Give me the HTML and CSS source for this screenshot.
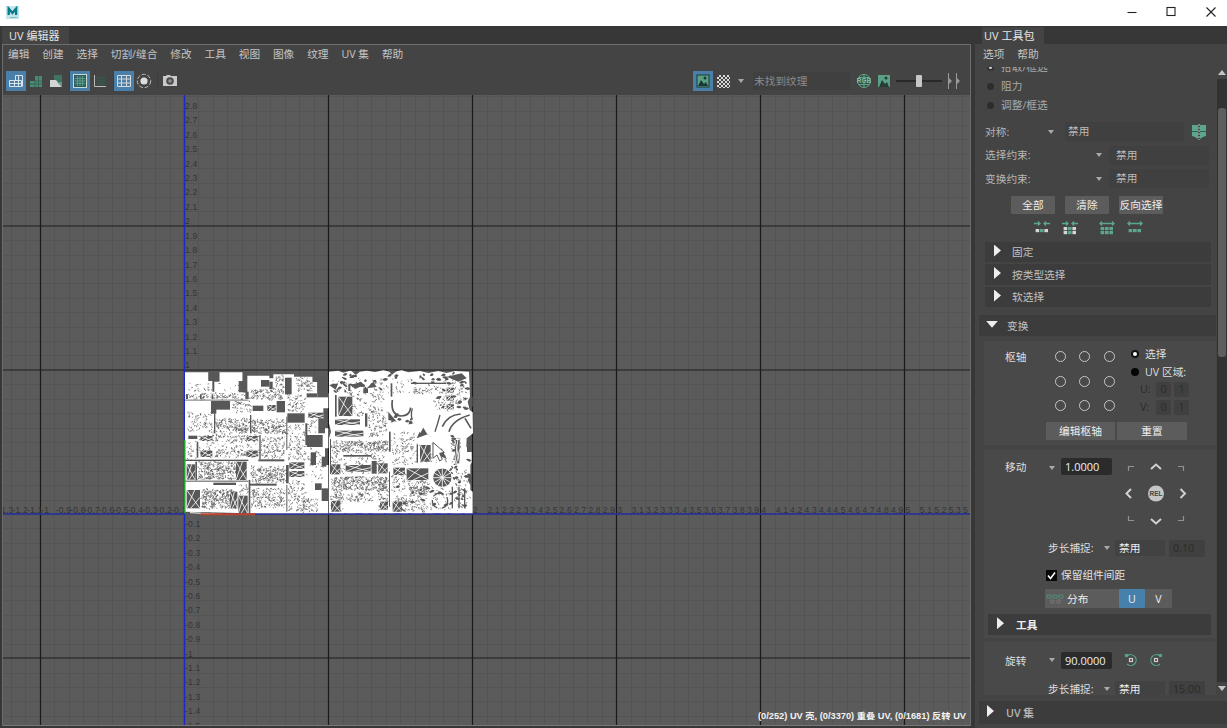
FILE: index.html
```html
<!DOCTYPE html>
<html lang="zh-CN">
<head>
<meta charset="utf-8">
<title>UV 编辑器</title>
<link rel="stylesheet" href="styles.css">
</head>
<body>
<header class="titlebar">
  <svg class="logo" width="13" height="13" viewBox="0 0 13 13"><rect width="13" height="13" fill="#c3e5ea"/><path d="M2.700 9V2.600L6.400 7l3.700-4.400V9" fill="none" stroke="#08798a" stroke-width="2.300"/><path d="M4 11.500h7" stroke="#7bbcc5"/></svg>
  <svg class="winbtns" width="90" height="24" viewBox="0 0 90 24" fill="none" stroke="#222" stroke-width="1.100"><path d="M1.500 12.500h9"/><rect x="41" y="7.500" width="8" height="8"/><path d="M80.500 7.500l9 9m0-9l-9 9"/></svg>
</header>
<main class="workspace">
  <section class="editor">
    <div class="tabs"><div class="tab">UV 编辑器</div></div>
    <div class="editor-panel">
      <nav class="menu"><span>编辑</span><span>创建</span><span>选择</span><span>切割/缝合</span><span>修改</span><span>工具</span><span>视图</span><span>图像</span><span>纹理</span><span>UV 集</span><span>帮助</span></nav>
      <div class="toolbar">
        <div class="tools">
          <span class="tool on"><svg width="16" height="16" viewBox="0 0 16 16" fill="none" stroke="#d8e4ea"><path d="M1.500 13.500v-6h5v6zM6.500 13.500v-6h7v6zM7.500 7.500v-5h7v11M1.500 10.500h12M10.500 2.500v11"/></svg></span>
          <span class="tool"><svg width="16" height="16" viewBox="0 0 16 16"><path d="M2 8h5V3h7v11H2z" fill="#4d8a75"/><path d="M2 11h12M7 8v6M10.500 3v11M7 8h7" stroke="#356553"/></svg></span>
          <span class="tool"><svg width="16" height="16" viewBox="0 0 16 16"><path d="M6 2h8v8H6z" fill="#3f735f"/><path d="M2 7h6l6 7H2z" fill="#d2d5d3"/><path d="M9 9h5v5z" fill="#5e9b83"/></svg></span>
          <i class="sep"></i>
          <span class="tool on"><svg width="16" height="16" viewBox="0 0 16 16"><rect x="1.500" y="1.500" width="13" height="13" fill="#2f6267" stroke="#c7d7cb"/><path d="M3 5.500h10M3 8h10M3 10.500h10M5.500 3v10M8 3v10M10.500 3v10" stroke="#5c9a80"/></svg></span>
          <span class="tool"><svg width="16" height="16" viewBox="0 0 16 16" fill="none"><path d="M2.500 2v11.500H14" stroke="#bbb"/><path d="M5 5h8M5 8h8M5 11h8M6 3v9M9 3v9M12 3v9" stroke="#315a4d"/></svg></span>
          <i class="sep"></i>
          <span class="tool on"><svg width="16" height="16" viewBox="0 0 16 16" fill="none" stroke="#d5d9db"><path d="M1.500 2.500h13v11h-13zM1 6h14M1 10h14M5.500 2v12M10.500 2v12"/></svg></span>
          <span class="tool"><svg width="16" height="16" viewBox="0 0 16 16"><circle cx="8" cy="8" r="3.600" fill="#ddd"/><circle cx="8" cy="8" r="6.700" fill="none" stroke="#bbb" stroke-dasharray="4 1.800"/></svg></span>
          <i class="sep"></i>
          <span class="tool camera"><svg width="16" height="16" viewBox="0 0 16 16"><path d="M1 3h3l1-1h3l1 1h6v10H1z" fill="#c9c9c9"/><circle cx="8" cy="8" r="3.800" fill="#4b4b4b"/><circle cx="8" cy="8" r="1.800" fill="#919191"/></svg></span>
        </div>
        <div class="texture">
          <span class="tool on"><svg width="14" height="14" viewBox="0 0 14 14"><rect x="1" y="1" width="12" height="12" fill="#5ba084" stroke="#193a34"/><path d="M2 12l3-6 3 4 2-2 2 4z" fill="#193a34"/><circle cx="9" cy="4" r="1.500" fill="#193a34"/></svg></span>
          <span class="checker"></span>
          <i class="arrow"></i>
          <span class="texname">未找到纹理</span>
          <svg class="rgb" width="16" height="16" viewBox="0 0 16 16"><circle cx="8" cy="8" r="6.500" fill="#344d43" stroke="#62a488"/><path d="M8 2v12M3 4.500h10M3 11.500h10" stroke="#62a488"/><text x="8" y="10.400" text-anchor="middle" font-size="6.500" font-weight="700" fill="#82bea2">RGB</text></svg>
          <svg width="14" height="14" viewBox="0 0 14 14"><rect x="1" y="1" width="12" height="12" fill="#5ba084"/><path d="M2 13l3-7 3 4 2-2 2 5z" fill="#243d36"/><circle cx="9" cy="4" r="1.500" fill="#243d36"/></svg>
          <div class="slider"><b></b></div>
          <svg width="16" height="18" viewBox="0 0 16 18" fill="#999"><path d="M1 1h1v5l3 3-3 3v5H1zM9 1h1v5l3 3-3 3v5H9z"/></svg>
        </div>
      </div>
      <svg class="viewport" id="viewport" width="967" height="630" viewBox="3 95 967 630"></svg>
    </div>
  </section>
  <aside class="toolkit">
    <div class="tabs"><div class="tab">UV 工具包</div></div>
    <nav class="menu kitmenu"><span>选项</span><span>帮助</span></nav>
    <div class="scrollwrap">
      <div class="scroll">
        <div class="opt first"><i class="dot lit"></i>拾取/框选</div>
        <div class="opt"><i class="dot"></i>阻力</div>
        <div class="opt"><i class="dot"></i>调整/框选</div>
        <div class="line sym"><span>对称:</span><i class="arrow"></i><span class="field">禁用</span>
          <svg width="16" height="16" viewBox="0 0 16 16"><path d="M1 1h6v14l-3-2-3-1zM9 1h6v11l-3 1-3 2z" fill="#5ca68b"/><path d="M1 7.500h14" stroke="#31604f"/><path d="M8 0v16" stroke="#a8cfc0" stroke-dasharray="2 1"/></svg></div>
        <div class="line con"><span>选择约束:</span><i class="arrow"></i><span class="field">禁用</span></div>
        <div class="line con"><span>变换约束:</span><i class="arrow"></i><span class="field">禁用</span></div>
        <div class="btns"><button>全部</button><button>清除</button><button>反向选择</button></div>
        <div class="growers" id="growers"></div>
        <div class="fold"><i class="tri"></i>固定</div>
        <div class="fold"><i class="tri"></i>按类型选择</div>
        <div class="fold"><i class="tri"></i>软选择</div>
        <div class="fold big"><i class="tri down"></i>变换</div>
        <div class="frame pivot">
          <div class="pivot-row">
            <span class="label">枢轴</span>
            <div class="ring-grid"><i></i><i></i><i></i><i></i><i></i><i></i><i></i><i></i><i></i></div>
            <div class="pivot-opts">
              <div class="radio"><i class="on"></i>选择</div>
              <div class="radio"><i></i>UV 区域:</div>
              <div class="uv"><span>U:</span><b>0</b><b>1</b></div>
              <div class="uv"><span>V:</span><b>0</b><b>1</b></div>
            </div>
          </div>
          <div class="pair"><button>编辑枢轴</button><button>重置</button></div>
        </div>
        <div class="frame move">
          <div class="move-row">
            <span class="label">移动</span><i class="arrow"></i><span class="num">1.0000</span>
            <svg class="pad" width="64" height="68" viewBox="0 0 64 68" fill="none"><g stroke="#929292" stroke-width="1.200"><path d="M5.500 11V6.500H11M55 6.500h5.500V11M5.500 56v4.500H11M55 60.500h5.500V56"/></g><g stroke="#d0d0d0" stroke-width="2"><path d="M28 9l5-4.500L38 9M28 59l5 4.500 5-4.500M8 29l-4.500 4.500L8 38M57.500 29l4.500 4.500-4.500 4.500"/></g><circle cx="33" cy="33.500" r="8" fill="#c5c5c5"/><text x="33" y="36" font-size="6.500" font-weight="700" text-anchor="middle" fill="#444">REL</text></svg>
          </div>
          <div class="step"><span>步长捕捉:</span><i class="arrow"></i><span class="choice">禁用</span><span class="dim">0.10</span></div>
          <div class="keep"><svg width="11" height="11" viewBox="0 0 11 11"><rect width="11" height="11" fill="#080808"/><path d="M2 5.500l2.500 3L9 2.500" fill="none" stroke="#fff" stroke-width="1.600"/></svg>保留组件间距</div>
          <div class="dist"><button class="distbtn"><svg width="18" height="12" viewBox="0 0 18 12" fill="none"><path d="M1 2h4v3H1zM7 2h4v3H7zM13 2h4v3h-4z" stroke="#4c8f78"/><path d="M5 7h3v3H5zM11 7h3v3h-3z" stroke="#777"/></svg>分布</button><button class="u">U</button><button class="v">V</button></div>
          <div class="fold tools-fold"><i class="tri"></i>工具</div>
        </div>
        <div class="frame rotate">
          <div class="rot-row">
            <span class="label">旋转</span><i class="arrow"></i><span class="num">90.0000</span>
            <svg width="14" height="14" viewBox="0 0 14 14" fill="none" stroke="#56a58a" stroke-width="1.200"><path d="M3.500 2.800A5.400 5.400 0 1 1 3 11"/><circle cx="2.500" cy="2.500" r="1.200" fill="#56a58a"/><rect x="5.500" y="5.500" width="3" height="3" stroke="#ccc"/></svg>
            <svg width="14" height="14" viewBox="0 0 14 14" fill="none" stroke="#56a58a" stroke-width="1.200"><path d="M10.500 2.800A5.400 5.400 0 1 0 11 11"/><circle cx="11.500" cy="2.500" r="1.200" fill="#56a58a"/><rect x="5.500" y="5.500" width="3" height="3" stroke="#ccc"/></svg>
          </div>
          <div class="step"><span>步长捕捉:</span><i class="arrow"></i><span class="choice">禁用</span><span class="dim">15.00</span></div>
        </div>
      </div>
      <div class="bar"><i class="up"></i><div class="track"><b></b></div><i class="dn"></i></div>
    </div>
    <div class="uvset"><i class="tri"></i>UV 集</div>
  </aside>
</main>
<script src="viewport.js"></script>
</body>
</html>
```

FILE: styles.css
```css
* { box-sizing: border-box; }
body { margin: 0; width: 1227px; height: 728px; overflow: hidden; background: #373737; color: #c9c9c9; font: 10.700px/16px "Open Sans", "Noto Sans CJK SC", sans-serif; display: flex; flex-direction: column; }
svg { display: block; flex: none; }
svg text { font-family: "Liberation Sans", "Noto Sans CJK SC", sans-serif; }
button { font: inherit; color: #eee; border: 0; padding: 0; margin: 0; background: #5c5c5c; border-radius: 1px; white-space: nowrap; }
i { flex: none; }
.titlebar { height: 26px; background: #fff; display: flex; justify-content: space-between; align-items: flex-start; padding: 0 11px 0 6px; }
.logo { margin-top: 6px; }
.workspace { display: flex; height: 702px; gap: 4px; }
.editor { width: 971px; padding-left: 2px; }
.tabs { height: 18px; display: flex; background: #373737; }
.tab { height: 17px; margin-top: 1px; background: #444; color: #e4e4e4; line-height: 18px; font-size: 11px; white-space: nowrap; }
.editor .tab { width: 67px; padding-left: 7px; }
.editor-panel { width: 969px; height: 682px; border: 1px solid #6d6d6d; background: #444; border-bottom-color: #777; }
.menu { display: flex; height: 19px; line-height: 18px; padding-left: 5px; gap: 12.850px; white-space: nowrap; color: #c4c4c4; }
.toolbar { height: 31px; display: flex; justify-content: space-between; align-items: center; padding: 3px 7px 0 3px; }
.tools, .texture { display: flex; align-items: center; }
.tool { width: 20px; height: 20px; display: flex; align-items: center; justify-content: center; }
.tool.on { background: #4a7fa9; }
.camera { margin-left: 2px; }
.sep { width: 4px; height: 18px; border-right: 1px solid #3d3d3d; }
.checker { width: 13px; height: 13px; margin-left: 4px; background: repeating-conic-gradient(#d8d8d8 0 25%, #444 0 50%) 0 0 / 4px 4px; }
.arrow { width: 0; height: 0; border: 3px solid transparent; border-top: 4px solid #aaa; border-bottom: 0; justify-self: center; }
.texture .arrow { margin: 0 9px 0 8px; }
.texname { width: 97px; height: 18px; line-height: 18px; padding-left: 1px; background: #404040; color: #8b8b8b; }
.rgb { margin: 0 5px; }
.texture > svg:nth-of-type(1) { margin-left: 6px; }
.slider { width: 46px; height: 14px; margin: 0 5px; display: flex; justify-content: center; background: linear-gradient(#292929, #292929) center / 100% 2px no-repeat; }
.slider b { width: 6px; height: 12px; margin-top: 1px; background: #c7c7c7; border-radius: 1px; }
.viewport { background: #5b5b5b; }
.toolkit { width: 252px; background: #444; }
.toolkit .tabs { padding-left: 7px; }
.toolkit .tab { width: 62px; padding-left: 2px; }
.kitmenu { height: 23px; line-height: 20px; padding-left: 8px; }
.scrollwrap { height: 628px; display: flex; justify-content: space-between; }
.scroll { width: 241px; height: 628px; overflow: hidden; display: flex; flex-direction: column; }
.scroll > * { flex: none; }
.opt { height: 19px; line-height: 19px; display: flex; align-items: center; gap: 7px; padding-left: 12px; color: #a9a9a9; }
.opt.first { margin-top: -9px; }
.dot { width: 7px; height: 7px; border-radius: 50%; background: #2c2c2c; }
.dot.lit { background: #ccc; border: 2px solid #333; }
.line { display: grid; align-items: center; height: 23.600px; padding-left: 10px; color: #b5b5b5; }
.sym { margin-top: 5px; grid-template-columns: 56px 20px 4px 126px 16px; }
.sym .arrow { grid-column: 2; }
.sym .field { grid-column: 3 / 5; width: 119px; margin-left: 4px; }
.con { grid-template-columns: 104px 20px 100px; }
.con .field { padding-left: 7px; }
.field { height: 19px; line-height: 19px; background: #404040; padding-left: 3px; color: #bababa; }
.btns { display: flex; gap: 10px; margin: 5px 0 0 36px; height: 18px; }
.btns button { width: 44px; }
.growers { display: flex; height: 28px; padding: 7px 0 0 59px; }
.fold { height: 20.500px; line-height: 20px; width: 226px; margin: 0 0 2px 10px; background: #3c3c3c; display: flex; align-items: center; padding-left: 9px; gap: 11px; color: #c1c1c1; }
.tri { width: 7px; height: 12px; background: #eee; clip-path: polygon(0 0, 100% 50%, 0 100%); margin-top: -3px; }
.tri.down { width: 12px; height: 7px; clip-path: polygon(0 0, 100% 0, 50% 100%); }
.fold.big { width: 237px; height: 21px; margin: 6px 0 5px 4px; padding-left: 7px; gap: 9px; }
.frame { width: 232px; margin-left: 9px; background: #494949; color: #dedede; }
.pivot { height: 104px; margin-bottom: 5px; }
.pivot-row { display: flex; height: 81px; padding-left: 21px; }
.label { width: 45px; padding-top: 8px; }
.ring-grid { display: grid; grid-template-columns: repeat(3, 24.500px); grid-template-rows: repeat(3, 24.500px); width: 74px; margin: 3px 0 0 -2px; justify-items: center; align-items: center; }
.ring-grid i { width: 11px; height: 11px; border: 1px solid #c5c5c5; border-radius: 50%; }
.pivot-opts { padding: 4px 0 0 9px; }
.radio { display: flex; align-items: center; gap: 6px; height: 17.500px; white-space: nowrap; }
.radio i { width: 8px; height: 8px; border-radius: 50%; background: #050505; }
.radio i.on { background: #fff; border: 2px solid #111; }
.uv { display: flex; height: 18px; gap: 3px; padding-left: 9px; color: #2b2b2b; align-items: center; }
.uv span { width: 13px; }
.uv b { width: 15px; height: 15px; line-height: 15px; text-align: center; background: #404040; font-weight: 400; border-radius: 2px; }
.pair { display: flex; gap: 2px; padding: 0 0 0 62px; height: 18px; }
.pair button { width: 69px; }
.pair button:last-child { width: 70px; }
.move { height: 188px; margin-bottom: 4px; }
.move-row, .rot-row { display: grid; grid-template-columns: 41px 12px 3px 51px 11px 64px; padding-left: 21px; }
.move-row { height: 88px; padding-top: 7px; align-items: start; }
.move-row .label, .rot-row .label { padding-top: 2px; }
.move-row .arrow { margin-top: 9px; }
.num { grid-column: 4; height: 17px; line-height: 17px; margin-top: 1px; background: #2b2b2b; padding-left: 4px; border-radius: 2px; color: #eee; font-size: 11px; }
.pad { grid-column: 6; margin: 3px 0 0 0; }
.step { display: grid; grid-template-columns: 52px 14px 1px 50px 4px 36px; padding-left: 64px; height: 20px; align-items: center; white-space: nowrap; }
.choice { grid-column: 4; background: #424242; height: 16px; line-height: 16px; padding-left: 4px; color: #eee; border-radius: 2px; }
.dim { grid-column: 6; background: #404040; height: 17px; line-height: 16px; padding-left: 4px; color: #2b2b2b; border-radius: 2px; }
.keep { display: flex; gap: 4px; align-items: center; padding-left: 62px; height: 34px; color: #e2e2e2; }
.dist { display: flex; padding-left: 61px; height: 19px; margin-top: -3px; }
.distbtn { width: 74px; display: flex; align-items: center; gap: 3px; padding-left: 1px; }
.u { width: 26px; background: #4780ab; }
.v { width: 27px; }
.tools-fold { width: 223px; height: 21px; margin: 6px 0 0 4px; gap: 12px; font-weight: 600; color: #eee; }
.rotate { height: 57px; padding-top: 7px; }
.rot-row { grid-template-columns: 41px 12px 3px 51px 12px 25px 20px; height: 29px; align-items: center; padding-bottom: 8px; }
.rot-row .num { margin-top: 1px; }
.rot-row svg:nth-of-type(1) { grid-column: 6; }
.rotate .step { margin-top: 1px; }
.bar { width: 10px; background: #444; display: flex; flex-direction: column; align-items: center; }
.up, .dn { width: 0; height: 0; border: 4px solid transparent; }
.up { border-bottom: 5px solid #c4c4c4; border-top: 0; margin: 3px 0 4px; }
.dn { border-top: 5px solid #c4c4c4; border-bottom: 0; margin-top: 4px; }
.track { width: 10px; height: 603px; background: #323232; padding: 29px 1px 0; }
.track b { display: block; height: 249px; background: #5e5e5e; border-radius: 3px; }
.uvset { height: 23px; margin: 6px 0 0 4px; background: #3c3c3c; display: flex; align-items: center; padding-left: 8px; gap: 12px; font-weight: 600; color: #b5b5b5; }
```

FILE: viewport.js
```js
const X0 = 184.4, Y0 = 514, U = 144.1;
let seed = 7;
const rnd = () => (seed = (seed * 16807) % 2147483647) / 2147483647;
const DARK = '#585858';
let out = '';
const line = (x1, y1, x2, y2, c, w = 1) => { out += `<path d="M${x1} ${y1}L${x2} ${y2}" stroke="${c}" stroke-width="${w}"/>`; };

// minor and major grid
for (let i = -12; i <= 54; i++) { const x = Math.round(X0 + i * U / 10 - .4) + .5; if (i % 10) line(x, 95, x, 725, '#535554'); }
for (let i = -14; i <= 29; i++) { const y = Math.round(Y0 - i * U / 10) + .5; if (i % 10) line(3, y, 970, y, '#535554'); }
for (let i = -1; i <= 5; i++) line(Math.round(X0 + i * U - .5) + .5, 95, Math.round(X0 + i * U - .5) + .5, 725, '#191919', 1.2);
for (let i = -1; i <= 2; i++) line(3, Y0 - Math.round(i * U), 970, Y0 - Math.round(i * U), '#1e1e1e', 1.2);

// axis labels
const label = (x, y, t) => { out += `<text x="${x}" y="${y}" font-size="8.500" letter-spacing=".2" fill="#343434">${t}</text>`; };
for (let i = -15; i <= 28; i++) if (i) label(185, Y0 - i * U / 10 - 1.5, String(i / 10));
for (let i = -13; i <= 54; i++) if (i) label(X0 + i * U / 10 + (i < 0 ? 1 : .5), 512.500, i === 54 ? '5' : String(i / 10));

line(184.500, 95, 184.500, 725, '#1c28c8', 1.2);
line(3, 514, 970, 514, '#2a35ac', 1.6);

// UV shells are described in units of a third of a pixel
const rects = (list, c) => list.forEach(([x, y, w, h]) => { out += `<rect x="${x}" y="${y}" width="${w}" height="${h}" fill="${c}"/>`; });
const polys = (list, c) => list.forEach(p => { out += `<polygon points="${p}" fill="${c}"/>`; });
const speck = (x, y, w, h, d) => {
  let p = '';
  for (let n = w * h * d / 100; n > 0; n--) {
    const a = rnd() * 6.3, l = 2 + rnd() * 5;
    p += `M${(x + rnd() * w).toFixed(1)} ${(y + rnd() * h).toFixed(1)}l${(l * Math.cos(a)).toFixed(1)} ${(l * Math.sin(a)).toFixed(1)}`;
  }
  out += `<path d="${p}" stroke="${DARK}" stroke-width="2.200"/>`;
};
// irregular slivers of background left between curved shells
const slivers = (x, y, w, h, n) => {
  for (; n > 0; n--) {
    const a = x + rnd() * w, b = y + rnd() * h, l = 7 + rnd() * 11, m = rnd() * 14 - 7;
    out += `<path d="M${a.toFixed(1)} ${b.toFixed(1)}q${(l / 2).toFixed(1)} ${(m - 8).toFixed(1)} ${l.toFixed(1)} ${m.toFixed(1)}q${(-l / 3).toFixed(1)} 8 ${(-l).toFixed(1)} ${(-m).toFixed(1)}z" fill="${DARK}"/>`;
  }
};
const cross = list => list.forEach(([x, y, w, h]) => {
  out += `<rect x="${x}" y="${y}" width="${w}" height="${h}" fill="${DARK}"/><path d="M${x} ${y}l${w} ${h}M${x} ${y + h}l${w * .6} ${-h}M${x + w * .3} ${y + h}l${w * .7} ${-h * .6}" stroke="#fff" stroke-width="2.500"/>`;
});

// first tile
out += '<g transform="translate(180 365) scale(.33333)">';
out += '<path d="M15 22H85V48H97V80H103V50H118V22H188V48H176V82H200V32H268V40H280V28H342V35H398V50H412V85H445V130H430V160H415V205H435V190H445V250H435V300H445V445H205L15 440Z" fill="#fff"/>';
[[25,140,75,62,1.6],[108,162,100,42,4.5],[215,165,105,40,4.5],[60,210,175,20,3],[25,232,205,22,.8],[60,255,175,22,3],[243,215,72,65,2.5],[55,290,112,52,4.8],[213,305,103,48,4.2],[65,375,105,55,4.8],[215,370,100,60,3],[325,180,52,105,1.8],[325,345,50,95,2],[365,400,50,40,3],[325,90,50,50,2.7],[345,38,55,42,2.5],[210,72,100,30,4],[155,110,60,30,2.5],[18,85,175,17,3],[285,32,28,35,3],[20,55,165,22,.7],[385,165,28,40,1.5],[170,360,40,30,2],[380,250,55,100,.7],[20,230,30,60,1]].forEach(a => speck(...a));
rects([[86,22,32,26],[188,22,14,60],[196,80,10,22],[398,34,46,17],[412,50,32,47],[243,45,25,20],[268,50,10,22],[315,38,20,50],[380,85,32,12],[93,108,57,26],[93,130,16,16],[218,122,32,16],[290,108,25,34],[322,145,52,28],[15,104,190,2.5],[25,212,27,10],[50,230,5,48],[15,284,190,4],[46,290,5,56],[235,283,78,6],[319,155,3,100],[15,347,190,3],[100,353,68,7],[210,356,80,6],[405,355,20,20],[425,370,20,38],[380,210,48,36],[392,262,16,38],[425,275,14,30],[318,300,8,55],[206,345,5,100],[319,360,3,80],[102,145,4,60],[210,150,4,55],[238,210,4,72],[376,175,6,65],[18,88,6,14],[60,88,5,14],[95,88,5,14]], DARK);
cross([[168,290,32,55],[175,392,28,53],[20,298,25,46],[20,375,40,55],[385,143,46,16],[62,213,35,15],[200,213,33,15],[62,257,35,19],[200,257,33,19],[328,292,45,20],[328,318,45,18],[262,120,25,18],[150,380,22,50]]);
out += '<path d="M15 441L80 443V450H15Z" fill="#585858"/><path d="M30 443L145 449" stroke="#fff" stroke-width="3"/><path d="M62 448H225" stroke="#bd442b" stroke-width="6"/><path d="M14 225V445" stroke="#20a02d" stroke-width="5"/></g>';

// second tile
out += '<g transform="translate(325 365) scale(.33333)">';
out += '<path d="M12 20L40 17L55 23L75 17L95 22L125 17L150 21L175 16L200 22L230 16L250 22L285 18L310 24L340 18L365 24L390 18L432 20L435 95L428 110L434 135L443 142L444 205L425 220L424 245L440 262V292L436 300V330L428 345L436 360V375L443 380V445H12V220L18 200L12 175Z" fill="#fff"/>';
[[20,40,390,45,.6],[132,125,55,90,2.2],[140,90,35,20,3.2],[20,228,168,32,4.8],[20,260,165,65,1.2],[20,335,170,42,5],[200,200,70,100,1.5],[268,68,45,20,2.4],[70,80,50,75,1.6],[200,330,110,50,2.2],[255,365,50,25,4.5],[210,390,95,50,2.5],[55,385,90,25,3],[315,365,60,70,1],[380,220,25,85,3],[330,55,95,80,1],[275,235,90,60,.6],[390,315,45,120,1],[20,380,35,60,3],[160,370,30,65,2.500]].forEach(a => speck(...a));
slivers(18, 26, 175, 50, 26);
slivers(195, 26, 225, 30, 20);
slivers(330, 60, 90, 75, 14);
slivers(195, 150, 70, 50, 8);
slivers(365, 205, 60, 90, 8);
slivers(370, 300, 60, 60, 12);
slivers(200, 360, 220, 70, 24);
rects([[30,90,5,65],[258,53,105,4],[120,145,7,40],[70,58,6,20],[115,70,14,14],[192,200,5,60],[15,222,3,105],[140,288,15,38],[55,270,85,5],[192,320,3,105],[435,95,8,30],[426,245,14,16],[275,238,4,55],[380,365,4,65],[400,365,4,65],[417,370,4,60],[197,55,5,40]], DARK);
polys(['12,60 40,55 32,74','78,60 108,50 118,60 90,72','125,70 145,50 155,66','190,140 215,170 190,165','275,220 292,183 305,205 330,225 308,208','365,35 410,25 425,40 400,50','337,270 350,250 365,282','190,15 215,18 200,30','80,18 105,20 92,30'], DARK);
cross([[40,95,42,58],[30,163,75,17],[30,197,85,18],[285,240,32,50],[62,300,75,20],[245,310,65,35],[205,308,35,22],[160,295,28,30],[18,298,28,30],[365,68,22,15],[365,92,22,15],[365,118,22,15],[203,410,28,30],[18,408,28,32],[165,410,24,24],[390,225,14,70]]);
out += '<path d="M202 105q-6 45 27 48q25 0 28-25M352 185q15-35 55-38M372 200q10-35 62-50M420 160l18 30" fill="none" stroke="#585858" stroke-width="5"/><path d="M262 130q-8 25 5 45M345 150q-8 30-15 50" fill="none" stroke="#585858" stroke-width="4"/><path d="M270 120l15 8 20-12 15 12 18 8-8 40-8 35-22-32-14 25-26-35 12-20z" fill="#fff"/>';
out += '<circle cx="352" cy="338" r="29" fill="#585858" stroke="#fff" stroke-width="3"/>';
for (let a = 0; a < 12; a++) out += `<path d="M352 338l${(28 * Math.cos(a * Math.PI / 6)).toFixed(1)} ${(28 * Math.sin(a * Math.PI / 6)).toFixed(1)}" stroke="#fff" stroke-width="2.500"/>`;
out += '<circle cx="345" cy="407" r="23" fill="none" stroke="#585858" stroke-width="4" stroke-dasharray="30 14"/><path d="M324 232v48l12-10 8 18 8-5-8-18 14-3z" fill="#fff" stroke="#585858" stroke-width="3"/><path d="M12 447H435" stroke="#2a35ac" stroke-width="3" stroke-dasharray="12 34 7 25 22 18"/></g>';

out += '<text x="966" y="718.500" text-anchor="end" textLength="208" lengthAdjust="spacingAndGlyphs" font-size="8.500" font-weight="700" fill="#f2f2f2">(0/252) UV 壳, (0/3370) 重叠 UV, (0/1681) 反转 UV</text>';
document.getElementById('viewport').innerHTML = out;

// grow and shrink selection buttons
const grower = (gap, inward, rows) => {
  const ends = inward ? '#d5d5d5' : '#5ca68b';
  let s = `<svg width="16" height="14" viewBox="0 0 16 14" style="margin-right:${gap}px"><path d="${inward ? 'M0 2.500h6M4 .5l2 2-2 2M16 2.500h-6M12 .5l-2 2 2 2' : 'M1 2.500h14M3 .5l-2 2 2 2M13 .5l2 2-2 2'}" fill="none" stroke="#5ca68b" stroke-width="1.300"/>`;
  for (let r = 0; r < rows; r++) for (let c = 0; c < 3; c++) s += `<rect x="${1.600 + c * 4.400}" y="${(rows === 1 ? 8 : 6) + r * 4}" width="3.600" height="3.200" fill="${c === 1 ? '#5ca68b' : ends}"/>`;
  return s + '</svg>';
};
document.getElementById('growers').innerHTML = grower(12, true, 1) + grower(21, true, 2) + grower(12, false, 2) + grower(0, false, 1);
```
